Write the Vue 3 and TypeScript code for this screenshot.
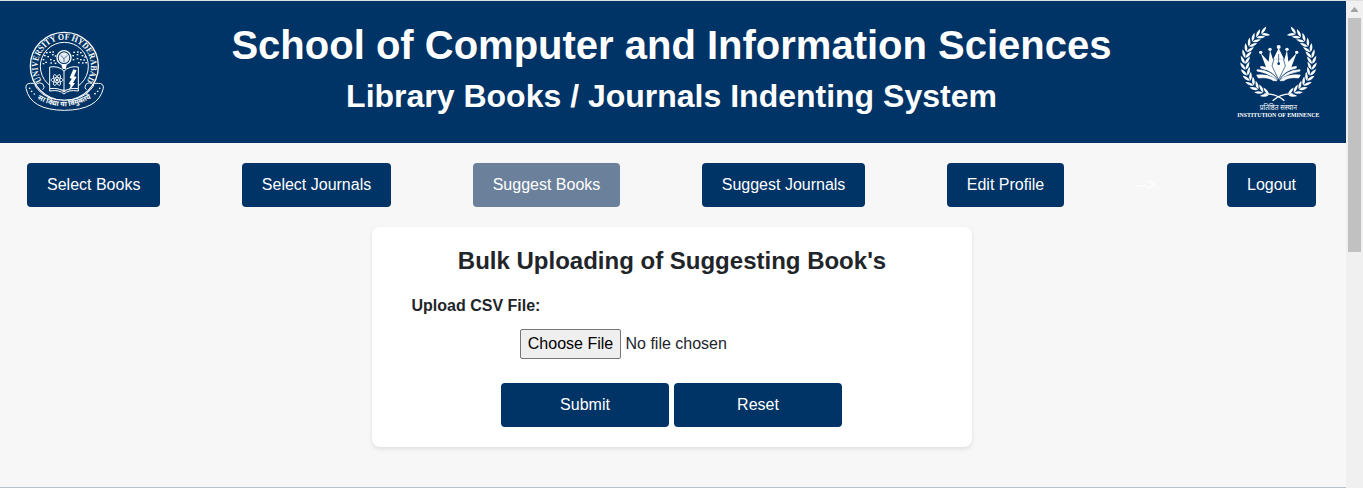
<script setup lang="ts">
interface NavItem {
  label: string
  active?: boolean
}

const navItems: NavItem[] = [
  { label: 'Select Books' },
  { label: 'Select Journals' },
  { label: 'Suggest Books', active: true },
  { label: 'Suggest Journals' },
  { label: 'Edit Profile' },
]

interface Leaf {
  x: number
  y: number
  angle: number
}

// Left half of the laurel wreath: pairs of leaves along a circular stem.
const leaves: Leaf[] = []
for (let i = 0; i < 14; i++) {
  const deg = 113 + i * 10.2
  const rad = (deg * Math.PI) / 180
  for (const side of [-1, 1]) {
    const r = 100 + side * 7
    leaves.push({
      x: 160 + r * Math.cos(rad),
      y: 143 + r * Math.sin(rad),
      angle: deg + 90 - side * 30,
    })
  }
}

const dots: [number, number][] = [
  [98, 98], [108, 97], [117, 96], [92, 107], [102, 110], [116, 104], [124, 108],
  [88, 119], [96, 127], [110, 119], [120, 122], [111, 129], [124, 130], [88, 131],
  [180, 97], [191, 96], [200, 98], [177, 107], [190, 104], [205, 107], [213, 111],
  [178, 119], [190, 116], [200, 119], [210, 120], [216, 128], [194, 128], [206, 129],
]
</script>

<template>
  <div class="page">
    <main class="content">
      <header class="banner">
        <svg class="logo seal" viewBox="0 0 300 300">
          <defs>
            <path id="sealArc" d="M84.500 183.500A80 80 0 1 1 217.500 183.500" />
            <path id="ribbonArc" d="M70 236Q150 284 240 230" />
          </defs>
          <g fill="none" stroke="#fff">
            <circle cx="151" cy="139" r="102" stroke-width="4" />
            <circle cx="151" cy="139" r="72" stroke-width="3" />
          </g>
          <path d="M62 190H49Q34 190 36 205Q49 270 151 271Q253 270 268 205Q270 190 253 190H240Q240 199 230 209Q203 241 151 241Q99 241 72 209Q62 199 62 190Z" fill="#036" stroke="#fff" stroke-width="3" />
          <path d="M66 194Q76 184 87 193Q94 203 86 209M237 194Q227 184 216 193Q209 203 217 209" fill="none" stroke="#fff" stroke-width="3" />
          <text class="seal-text"><textPath href="#sealArc" startOffset="1" textLength="344" lengthAdjust="spacingAndGlyphs">UNIVERSITY OF HYDERABAD</textPath></text>
          <g fill="#fff">
            <circle cx="47" cy="205" r="2.500" /><circle cx="53" cy="214" r="2.500" /><circle cx="61" cy="222" r="2.500" />
            <circle cx="257" cy="205" r="2.500" /><circle cx="251" cy="214" r="2.500" /><circle cx="243" cy="221" r="2.500" />
          </g>
          <text class="motto"><textPath href="#ribbonArc" textLength="170">सा विद्या या विमुक्तये</textPath></text>
          <rect v-for="(d, i) in dots" :key="i" :x="d[0] - 2" :y="d[1] - 2" width="5" height="4" fill="#fff" />
          <circle cx="150" cy="113" r="21" fill="none" stroke="#fff" stroke-width="4" />
          <circle cx="150" cy="113" r="16" fill="#fff" opacity=".9" />
          <path d="M140 106L150 116L160 106M150 116V127" fill="none" stroke="#036" stroke-width="2" />
          <path d="M142 135H158L155 147H146Z" fill="#fff" />
          <path d="M107 141Q135 137 150 153Q166 137 193 141V206Q164 202 150 216Q136 202 107 206ZM150 153V216M107 206V213Q136 208 150 222Q164 208 193 213V206" fill="#036" stroke="#fff" stroke-width="3" />
          <g fill="none" stroke="#fff" stroke-width="2.500">
            <ellipse cx="129" cy="180" rx="18" ry="7" />
            <ellipse cx="129" cy="180" rx="18" ry="7" transform="rotate(60 129 180)" />
            <ellipse cx="129" cy="180" rx="18" ry="7" transform="rotate(120 129 180)" />
          </g>
          <circle cx="129" cy="180" r="4" fill="#fff" />
          <path d="M178 148L188 151L180 169L188 171L177 188L183 190L165 213L170 194L164 191L173 177L167 173Z" fill="#fff" />
        </svg>

        <div class="titles">
          <h1>School of Computer and Information Sciences</h1>
          <h2>Library Books / Journals Indenting System</h2>
        </div>

        <svg class="logo eminence" viewBox="0 0 330 330">
          <defs>
            <g id="branch" fill="#fff">
              <path
                v-for="(leaf, i) in leaves"
                :key="i"
                d="M-13 0Q-2 -8 14 0Q-2 8 -13 0Z"
                :transform="`translate(${leaf.x} ${leaf.y}) rotate(${leaf.angle})`"
              />
              <path d="M118 237Q152 234 178 257" fill="none" stroke="#fff" stroke-width="4" />
            </g>
          </defs>
          <use href="#branch" />
          <use href="#branch" transform="translate(321 0) scale(-1 1)" />
          <g fill="#fff">
            <circle cx="107" cy="112" r="5" /><circle cx="135" cy="103" r="5" /><circle cx="161" cy="96" r="6" />
            <circle cx="186" cy="103" r="5" /><circle cx="215" cy="112" r="5" />
            <path d="M107 114L131 140L135 105L144 134L161 99L178 134L186 105L190 140L215 114L197 162Q176 168 162 192Q147 168 125 162Z" />
            <path d="M96 164Q138 165 158 195Q130 173 96 168ZM107 154Q143 157 159 192Q139 166 107 159ZM95 180Q134 176 156 197H145Q130 185 100 189ZM225 164Q183 165 163 195Q191 173 225 168ZM214 154Q178 157 162 192Q182 166 214 159ZM226 180Q187 176 165 197H176Q191 185 221 189Z" stroke="#fff" stroke-width="2" />
          </g>
          <path d="M147 131H175L181 153L161 194L141 153Z" fill="#fff" stroke="#036" stroke-width="2" />
          <path d="M147 130H175" stroke="#fff" stroke-width="3" />
          <path d="M161 117V144" stroke="#036" stroke-width="2" />
          <circle cx="161" cy="146" r="4" fill="#036" />
          <path d="M123 166Q146 173 159 196M199 166Q176 173 163 196" fill="none" stroke="#036" stroke-width="2" />
          <text class="hindi" x="160" y="285" textLength="111" lengthAdjust="spacingAndGlyphs">प्रतिष्ठित संस्थान</text>
          <text class="institution" x="160" y="306" textLength="246" lengthAdjust="spacingAndGlyphs">INSTITUTION OF EMINENCE</text>
        </svg>
      </header>

      <nav class="menu">
        <a v-for="item in navItems" :key="item.label" class="menu-link" :class="{ active: item.active }">{{ item.label }}</a>
        <span class="arrow">--&gt;</span>
        <a class="menu-link">Logout</a>
      </nav>

      <form class="card" @submit.prevent>
        <h2>Bulk Uploading of Suggesting Book's</h2>
        <label>Upload CSV File:</label>
        <div class="file-row">
          <button type="button" class="choose">Choose File</button>
          <span>No file chosen</span>
        </div>
        <div class="actions">
          <button type="submit">Submit</button>
          <button type="reset">Reset</button>
        </div>
      </form>
    </main>

    <aside class="scrollbar">
      <svg class="up" viewBox="0 0 17 17"><path d="M5 11V10L8.500 6L12 10V11Z" fill="#a3a3a3" /></svg>
      <div class="thumb"></div>
    </aside>
  </div>
</template>

<style>
body {
  margin: 0;
  overflow: hidden;
}
</style>

<style scoped>
* {
  box-sizing: border-box;
}
.page {
  display: flex;
  width: 1363px;
  height: 488px;
  border-top: 1px solid #dee1e4;
  background: #f7f7f7;
  color: #212529;
  font: 16px/24px "Liberation Sans", Arial, sans-serif;
}
.content {
  width: 1346px;
  border-bottom: 1px solid #b9c1ca;
}
.banner {
  display: flex;
  justify-content: space-between;
  height: 142px;
  padding: 0 11px 0 14px;
  background: #036;
  color: #fff;
}
.logo {
  flex: none;
}
.seal {
  width: 100px;
  height: 100px;
  margin-top: 19px;
}
.eminence {
  width: 110px;
  height: 110px;
  margin-top: 14px;
}
.seal-text {
  fill: #fff;
  font: bold 27px "Liberation Serif", serif;
}
.motto {
  fill: #fff;
  font: bold 21px "Noto Sans", sans-serif;
}
.hindi {
  fill: #fff;
  text-anchor: middle;
  font: 22px "Noto Sans", sans-serif;
}
.institution {
  fill: #fff;
  text-anchor: middle;
  font: bold 16px "Liberation Serif", serif;
}
.titles {
  padding-left: 4px;
  text-align: center;
  white-space: nowrap;
}
.titles h1 {
  margin: 20px 0 0;
  font-size: 40px;
  line-height: 48px;
}
.titles h2 {
  margin: 8px 0 0;
  font-size: 32px;
  line-height: 38px;
}
.menu {
  display: flex;
  justify-content: space-between;
  align-items: center;
  height: 44px;
  margin: 20px 30px 20px 27px;
  color: #fff;
}
.menu-link {
  padding: 10px 20px;
  border-radius: 4px;
  background: #036;
}
.menu-link.active {
  background: #6b819b;
}
.arrow {
  margin: 0 -10px;
}
.card {
  width: 600px;
  height: 220px;
  margin-left: 372px;
  padding: 19px 40px 20px;
  border-radius: 8px;
  background: #fff;
  box-shadow: 0 2px 4px rgba(0, 0, 0, 0.1);
}
.card h2 {
  margin: 0 0 19px;
  font-size: 24px;
  line-height: 29px;
  text-align: center;
}
.card label {
  display: block;
  margin-left: -0.5px;
  font-weight: bold;
  line-height: 24px;
}
.file-row {
  display: flex;
  align-items: center;
  gap: 4.5px;
  height: 30px;
  margin: 11px 0 24px 108px;
}
button {
  font: inherit;
}
.choose {
  width: 101px;
  height: 30px;
  padding: 0;
  border: 1px solid #767676;
  border-radius: 2px;
  background: #efefef;
  color: #000;
}
.actions {
  display: flex;
  gap: 5px;
  margin-left: 89px;
}
.actions button {
  width: 168px;
  height: 44px;
  padding: 0;
  border: 0;
  border-radius: 4px;
  background: #036;
  color: #fff;
}
.scrollbar {
  width: 17px;
  background: #f0f0f0;
}
.up {
  display: block;
  width: 17px;
  height: 17px;
}
.thumb {
  width: 13px;
  height: 234px;
  margin-left: 2px;
  background: #c1c1c1;
}
</style>
